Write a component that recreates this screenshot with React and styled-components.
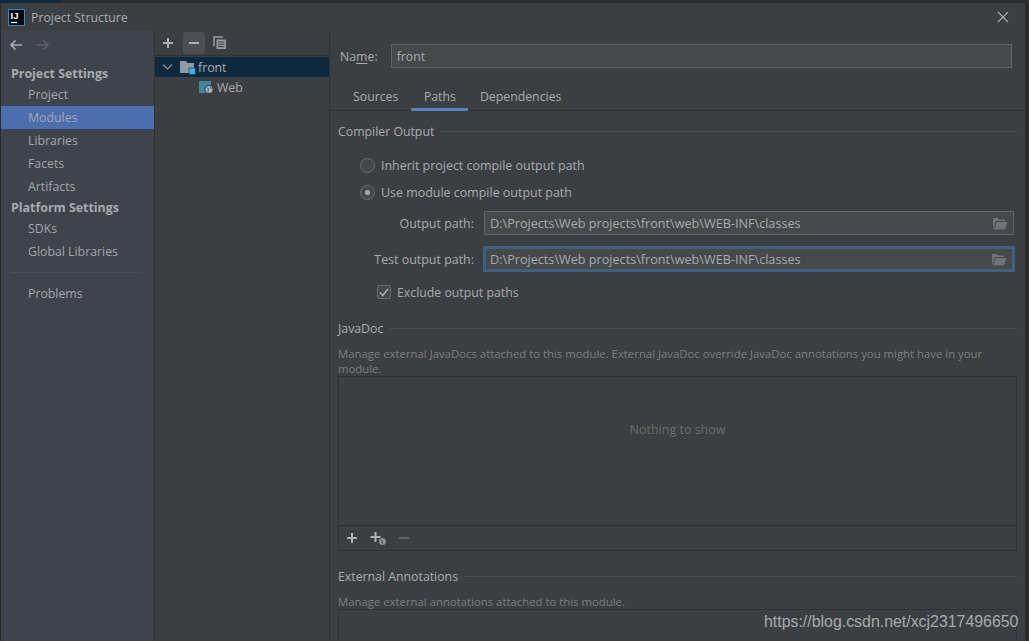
import React from "react";
import styled, { createGlobalStyle } from "styled-components";

const GlobalStyle = createGlobalStyle`
  html, body {
    margin: 0;
    padding: 0;
    height: 100%;
    overflow: hidden;
    background: #2b2b2b;
  }
  body {
    font-family: "Open Sans", "Noto Sans", sans-serif;
    font-size: 12px;
    color: #afb1b3;
  }
`;

const Screen = styled.div`
  position: relative;
  width: 1029px;
  height: 641px;
  padding: 3px 4px 0 1px;
  box-sizing: border-box;
  background: #2b2b2b;
  overflow: hidden;

  /* strip of the window behind the dialog */
  &::before {
    content: "";
    position: absolute;
    left: 0;
    top: 0;
    width: 61px;
    height: 3px;
    background: #0d293e;
  }
`;

const Dialog = styled.div`
  display: flex;
  flex-direction: column;
  height: 638px;
  background: #3c3f41;
  overflow: hidden;
`;

const TitleBar = styled.div`
  display: flex;
  align-items: center;
  flex: 0 0 28px;
  padding: 0 16px 0 7px;
  gap: 6px;
  color: #a9abad;
  font-size: 12.3px;
`;

const AppLogo = styled.svg`
  width: 17px;
  height: 17px;
`;

const CloseIcon = styled.svg`
  margin-left: auto;
  width: 12px;
  height: 12px;
`;

const Body = styled.div`
  display: flex;
  flex: 1;
  min-height: 0;
`;

const Sidebar = styled.nav`
  display: flex;
  flex-direction: column;
  flex: 0 0 153px;
  background: #3e434c;
  border-right: 1px solid #323232;
`;

const NavArrows = styled.div`
  display: flex;
  align-items: center;
  gap: 13px;
  height: 28px;
  padding-left: 8px;
  margin-bottom: 6px;
`;

const SectionLabel = styled.div`
  height: 18px;
  line-height: 18px;
  padding-left: 10px;
  font-weight: 700;
  font-size: 12.4px;
  color: #a9abad;
  margin-top: ${(p) => p.$top || 0}px;
`;

const NavItem = styled.div`
  height: 23px;
  line-height: 23px;
  padding-left: 27px;
  color: #a4a6a8;
  font-size: 12.3px;
  background: ${(p) => (p.$active ? "#4b6eaf" : "transparent")};
`;

const NavRule = styled.div`
  height: 1px;
  background: #4a4d50;
  margin: 9px 12px 9px 10px;
`;

const TreePane = styled.div`
  display: flex;
  flex-direction: column;
  flex: 0 0 174px;
  background: #3c3f41;
  border-right: 1px solid #323232;
`;

const TreeToolbar = styled.div`
  display: flex;
  align-items: center;
  flex: 0 0 24px;
  gap: 4px;
  padding: 0 0 0 2px;
  margin-bottom: 1px;
  border-bottom: 1px solid #323232;
`;

const ToolButton = styled.div`
  display: flex;
  align-items: center;
  justify-content: center;
  width: 22px;
  height: 22px;
  border-radius: 3px;
  background: ${(p) => (p.$pressed ? "#4c5052" : "transparent")};
`;

const TreeRow = styled.div`
  display: flex;
  align-items: center;
  height: 20px;
  gap: 2px;
  padding-left: ${(p) => p.$indent}px;
  background: ${(p) => (p.$selected ? "#0d293e" : "transparent")};
  color: #a9abad;
  font-size: 12.3px;
`;

const Content = styled.main`
  flex: 1;
  min-width: 0;
  display: flex;
  flex-direction: column;
`;

const NameRow = styled.div`
  display: flex;
  align-items: center;
  gap: 13px;
  padding: 13px 13px 0 10px;
`;

const FieldLabel = styled.label`
  color: #a9abad;
  font-size: 12.3px;
  u {
    text-underline-offset: 2px;
  }
`;

const TextBox = styled.div`
  flex: 1;
  display: flex;
  align-items: center;
  justify-content: space-between;
  box-sizing: border-box;
  height: 24px;
  padding: 0 5px 0 ${(p) => (p.$focused ? 4 : 5)}px;
  background: #45494a;
  border: ${(p) => (p.$focused ? "2px solid #3d6185" : "1px solid #646464")};
  box-shadow: ${(p) => (p.$focused ? "0 0 0 1px #3d6185" : "none")};
  color: #a9abad;
  font-size: ${(p) => (p.$path ? 12.65 : 12.3)}px;
`;

const Tabs = styled.div`
  display: flex;
  gap: 3px;
  height: 27px;
  margin-top: 15px;
  padding-left: 13px;
  border-bottom: 1px solid #323232;
`;

const Tab = styled.div`
  box-sizing: border-box;
  height: 28px;
  line-height: 28px;
  padding: 0 ${(p) => p.$pad}px;
  color: #a9abad;
  font-size: 12.3px;
  border-bottom: 3px solid ${(p) => (p.$active ? "#4a88c7" : "transparent")};
`;

const Section = styled.section`
  padding: 0 8px;
  margin-top: ${(p) => p.$top}px;
`;

const SectionTitle = styled.div`
  display: flex;
  align-items: center;
  gap: 7px;
  height: 18px;
  color: #a9abad;
  font-size: 12.3px;
  &::after {
    content: "";
    flex: 1;
    height: 1px;
    background: #4a4d50;
  }
`;

const RadioRow = styled.div`
  display: flex;
  align-items: center;
  gap: 6px;
  height: 18px;
  margin-top: ${(p) => p.$top}px;
  padding-left: 22px;
  color: #a9abad;
  font-size: 12.45px;
`;

const Radio = styled.span`
  display: flex;
  align-items: center;
  justify-content: center;
  box-sizing: border-box;
  width: 15px;
  height: 15px;
  border-radius: 50%;
  border: 1px solid #6b6b6b;
  background: #43494a;
  &::after {
    content: "";
    display: ${(p) => (p.$checked ? "block" : "none")};
    width: 5px;
    height: 5px;
    border-radius: 50%;
    background: #a9abad;
  }
`;

const PathRow = styled.div`
  display: flex;
  align-items: center;
  height: 24px;
  margin-top: ${(p) => p.$top}px;
  margin-right: 3px;
`;

const PathLabel = styled.div`
  flex: 0 0 146px;
  text-align: right;
  padding-right: 10px;
  box-sizing: border-box;
  color: #a9abad;
  font-size: 12.45px;
`;

const CheckRow = styled.div`
  display: flex;
  align-items: center;
  gap: 6px;
  height: 18px;
  margin-top: 12px;
  padding-left: 39px;
  color: #a9abad;
  font-size: 12.3px;
`;

const CheckBox = styled.span`
  display: flex;
  align-items: center;
  justify-content: center;
  box-sizing: border-box;
  width: 14px;
  height: 14px;
  border: 1px solid #6b6b6b;
  border-radius: 2px;
  background: #43494a;
`;

const Hint = styled.p`
  margin: ${(p) => p.$top}px 0 0;
  color: #7b7e80;
  font-size: 11.35px;
  line-height: 15px;
  padding-right: 16px;
`;

const ListBox = styled.div`
  display: flex;
  flex-direction: column;
  box-sizing: border-box;
  height: ${(p) => p.$height}px;
  border: 1px solid #323232;
  ${(p) => (p.$open ? "border-bottom: none;" : "")}
`;

const EmptyText = styled.div`
  flex: 1;
  display: flex;
  align-items: center;
  justify-content: center;
  padding-bottom: 44px;
  color: #6a6d6f;
  font-size: 12.5px;
`;

const ListToolbar = styled.div`
  display: flex;
  align-items: center;
  flex: 0 0 24px;
  gap: 4px;
  padding-left: 2px;
  border-top: 1px solid #323232;
`;

const Watermark = styled.div`
  position: absolute;
  left: 764px;
  top: 612px;
  font-family: "Liberation Sans", Arial, sans-serif;
  font-size: 15.9px;
  line-height: 20px;
  color: #a8aaab;
  white-space: nowrap;
`;

const Plus = ({ color = "#afb1b3" }) => (
  <svg width="12" height="12" viewBox="0 0 12 12">
    <path d="M6 1v10M1 6h10" stroke={color} strokeWidth="2" />
  </svg>
);

const Minus = ({ color = "#afb1b3" }) => (
  <svg width="12" height="12" viewBox="0 0 12 12">
    <path d="M1 6h10" stroke={color} strokeWidth="2" />
  </svg>
);

const CopyIcon = () => (
  <svg width="14" height="14" viewBox="0 0 14 14">
    <path d="M1 10V1h9" fill="none" stroke="#9a9c9e" strokeWidth="1.5" />
    <path d="M3.5 3.5H13V13H3.5z" fill="#9a9c9e" />
    <path d="M5 6h6.5M5 8.3h6.5M5 10.6h6.5" stroke="#3c3f41" strokeWidth="1" />
  </svg>
);

const BackArrow = ({ color, flip }) => (
  <svg width="14" height="12" viewBox="0 0 14 12" style={flip ? { transform: "scaleX(-1)" } : undefined}>
    <path d="M13 6H2M6.5 1.5 2 6l4.500 4.500" fill="none" stroke={color} strokeWidth="1.7" />
  </svg>
);

const FolderOpen = () => (
  <svg width="16" height="13" viewBox="0 0 16 13">
    <path d="M1 12V1h5l1.500 1.500H13V4H4L1 12z" fill="#6f7375" />
    <path d="M4.600 5H15.500l-2.400 7.500H1.800z" fill="#6f7375" />
  </svg>
);

const ModuleFolder = () => (
  <svg width="16" height="15" viewBox="0 0 16 15">
    <path d="M0 1h6l1.500 2H14v10H0z" fill="#8e9ba6" />
    <path d="M9 8h6.500v6.500H9z" fill="#3fb0e0" stroke="#0d293e" strokeWidth="0.6" />
  </svg>
);

const WebFacet = () => (
  <svg width="16" height="15" viewBox="0 0 16 15">
    <path d="M0 1h12v12H0z" fill="#3e86a0" />
    <circle cx="10" cy="9.500" r="4.500" fill="#3c3f41" />
    <circle cx="10" cy="9.500" r="3.500" fill="#a9b7c6" />
    <path d="M8 8c1 0 2 .5 1.500 1.500S8.500 11 9.500 12.500M11 7c0 1 1.500 1 1.500 2" fill="none" stroke="#3c3f41" strokeWidth="0.9" />
  </svg>
);

const AddWeb = () => (
  <svg width="17" height="15" viewBox="0 0 17 15">
    <path d="M5.500 1v10M.5 6h10" stroke="#afb1b3" strokeWidth="2" />
    <circle cx="12.500" cy="10.500" r="3.500" fill="#8d9092" />
    <path d="M11 9.500c1 0 1.500.5 1 1.500s.5 1 .5 2" fill="none" stroke="#3c3f41" strokeWidth="0.9" />
  </svg>
);

const navItems = ["Project", "Modules", "Libraries", "Facets", "Artifacts"];
const platformItems = ["SDKs", "Global Libraries"];
const outputDir = "D:\\Projects\\Web projects\\front\\web\\WEB-INF\\classes";

const App = () => (
  <>
    <GlobalStyle />
    <Screen>
      <Dialog>
        <TitleBar>
          <AppLogo viewBox="0 0 17 17">
            <rect x="0.500" y="0.500" width="16" height="16" fill="#000" stroke="#1f8fe0" />
            <text x="2.500" y="10" fill="#fff" fontSize="9.500" fontWeight="700" fontFamily="Liberation Sans">IJ</text>
            <path d="M3 13.500h6" stroke="#fff" strokeWidth="1.300" />
          </AppLogo>
          Project Structure
          <CloseIcon viewBox="0 0 12 12">
            <path d="M1 1l10 10M11 1 1 11" stroke="#a9abad" strokeWidth="1.100" />
          </CloseIcon>
        </TitleBar>
        <Body>
          <Sidebar>
            <NavArrows>
              <BackArrow color="#a9abad" />
              <BackArrow color="#5e6163" flip />
            </NavArrows>
            <SectionLabel>Project Settings</SectionLabel>
            {navItems.map((item) => (
              <NavItem key={item} $active={item === "Modules"}>{item}</NavItem>
            ))}
            <SectionLabel $top={1}>Platform Settings</SectionLabel>
            {platformItems.map((item) => (
              <NavItem key={item}>{item}</NavItem>
            ))}
            <NavRule />
            <NavItem>Problems</NavItem>
          </Sidebar>
          <TreePane>
            <TreeToolbar>
              <ToolButton><Plus /></ToolButton>
              <ToolButton $pressed><Minus /></ToolButton>
              <ToolButton><CopyIcon /></ToolButton>
            </TreeToolbar>
            <TreeRow $selected $indent={7}>
              <svg width="11" height="8" viewBox="0 0 11 8" style={{ marginRight: 5 }}>
                <path d="M1 1.500 5.500 6 10 1.500" fill="none" stroke="#8f9294" strokeWidth="1.200" />
              </svg>
              <ModuleFolder />
              front
            </TreeRow>
            <TreeRow $indent={44}>
              <WebFacet />
              Web
            </TreeRow>
          </TreePane>
          <Content>
            <NameRow>
              <FieldLabel>Na<u>m</u>e:</FieldLabel>
              <TextBox>front</TextBox>
            </NameRow>
            <Tabs>
              <Tab $pad={10}>Sources</Tab>
              <Tab $active $pad={12.5}>Paths</Tab>
              <Tab $pad={8.5}>Dependencies</Tab>
            </Tabs>
            <Section $top={11}>
              <SectionTitle>Compiler Output</SectionTitle>
              <RadioRow $top={16}><Radio />Inherit project compile output path</RadioRow>
              <RadioRow $top={9}><Radio $checked />Use module compile output path</RadioRow>
              <PathRow $top={10}>
                <PathLabel>Output path:</PathLabel>
                <TextBox $path>{outputDir}<FolderOpen /></TextBox>
              </PathRow>
              <PathRow $top={12}>
                <PathLabel>Test output path:</PathLabel>
                <TextBox $path $focused>{outputDir}<FolderOpen /></TextBox>
              </PathRow>
              <CheckRow>
                <CheckBox>
                  <svg width="10" height="9" viewBox="0 0 10 9">
                    <path d="M1 4.500 3.800 7.500 9 1" fill="none" stroke="#a9abad" strokeWidth="1.600" />
                  </svg>
                </CheckBox>
                Exclude output paths
              </CheckRow>
            </Section>
            <Section $top={18}>
              <SectionTitle>JavaDoc</SectionTitle>
              <Hint $top={9}>
                Manage external JavaDocs attached to this module. External JavaDoc override JavaDoc annotations you might have in your module.
              </Hint>
              <ListBox $height={175}>
                <EmptyText>Nothing to show</EmptyText>
                <ListToolbar>
                  <ToolButton><Plus /></ToolButton>
                  <ToolButton><AddWeb /></ToolButton>
                  <ToolButton><Minus color="#5e6163" /></ToolButton>
                </ListToolbar>
              </ListBox>
            </Section>
            <Section $top={16}>
              <SectionTitle>External Annotations</SectionTitle>
              <Hint $top={9}>Manage external annotations attached to this module.</Hint>
              <ListBox $height={40} $open />
            </Section>
          </Content>
        </Body>
      </Dialog>
      <Watermark>https://blog.csdn.net/xcj2317496650</Watermark>
    </Screen>
  </>
);

export default App;
